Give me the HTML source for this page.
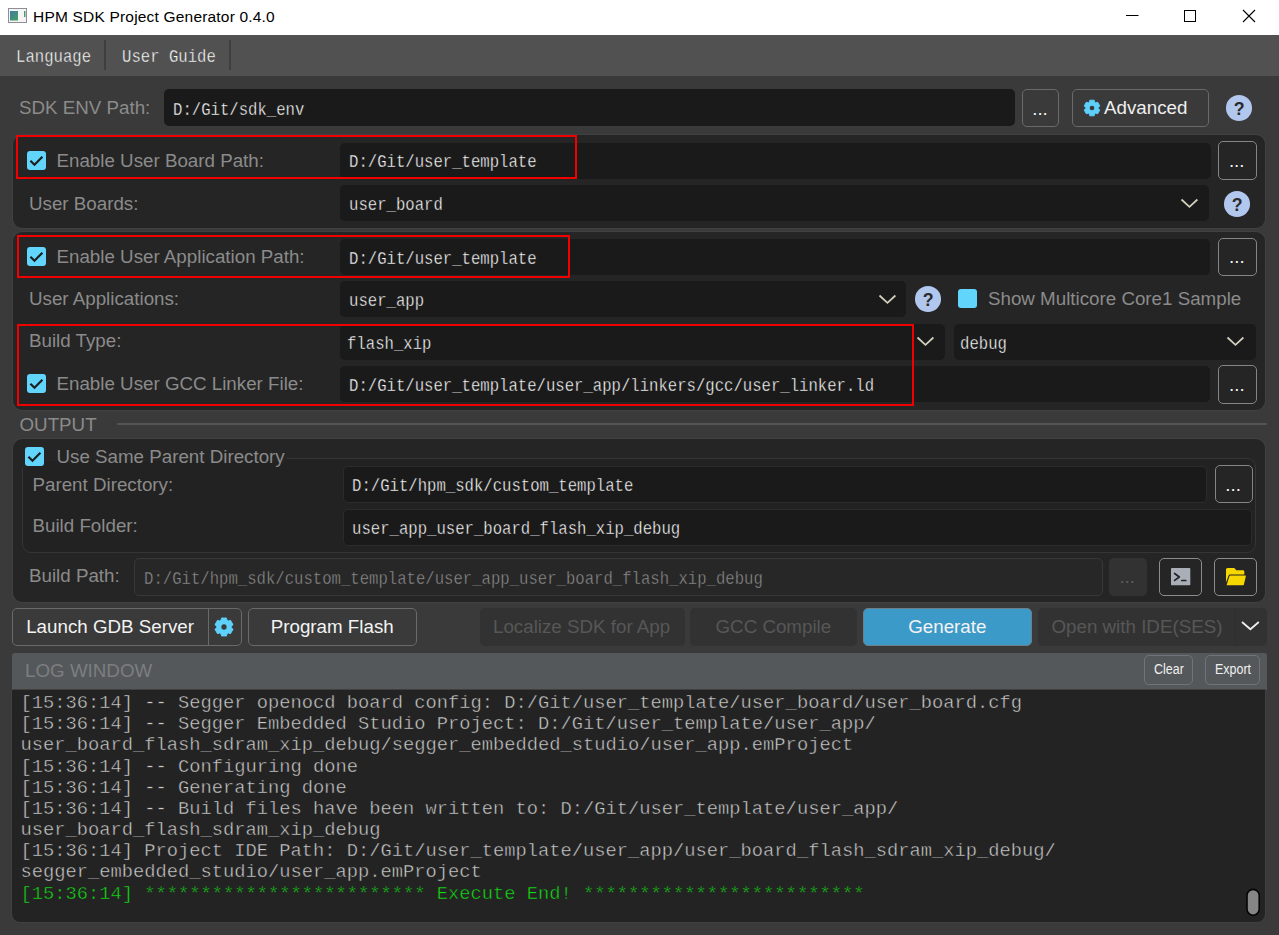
<!DOCTYPE html>
<html>
<head>
<meta charset="utf-8">
<title>HPM SDK Project Generator 0.4.0</title>
<style>
*{box-sizing:border-box;margin:0;padding:0}
html,body{width:1279px;height:935px;overflow:hidden;background:#3a3a3a;font-family:"Liberation Sans",sans-serif}
#app{position:relative;width:1279px;height:935px;overflow:hidden;background:#3a3a3a}
.abs{position:absolute}
.titlebar{left:0;top:0;width:1279px;height:35px;background:#fff}
.title{left:33px;top:7px;height:20px;line-height:20px;font-size:15.5px;letter-spacing:0.19px;color:#000;white-space:nowrap}
.menubar{left:0;top:35px;width:1279px;height:41px;background:#515151}
.msep{width:1.500px;top:40px;height:30px;background:#3e3e3e}
/* SimSun-like narrow mono */
.m{position:absolute;font-family:"Liberation Mono",monospace;font-size:18.750px;height:24px;line-height:24px;white-space:pre;color:#ffffff;-webkit-text-stroke:0.400px #1a1a1a;transform:scaleX(0.8333);transform-origin:0 50%}
.l{position:absolute;font-size:18.750px;height:22px;line-height:22px;white-space:nowrap;color:#8b8b8b}
.panel{position:absolute;background:#252525;border-radius:9px;box-shadow:0 0 0 1px #414141}
.in{position:absolute;background:#1a1a1a;border-radius:5px}
.btn{position:absolute;border:1px solid #6a6a6a;border-radius:5px;background:#3a3a3a}
.dots{position:absolute;display:flex;gap:2px}
.dots i{display:block;width:2px;height:2px;background:#f2f2f2}
.cb{position:absolute;width:19px;height:19px;border-radius:3px;background:#61d5fc}
.red{position:absolute;border:2px solid #f20000}
.chev{fill:none;stroke:#d3d0be;stroke-width:1.75}
.l.w{color:#f3f3f3}
.l.d{color:#575757}
.l.s{font-size:14px;color:#f0f0f0;height:20px;line-height:20px;transform:scaleX(0.89);transform-origin:0 50%}
.dis{position:absolute;background:#323232;border-radius:5px}
.btn.sm{background:#54585b;border-color:#70747a;border-radius:5px}
.log{left:20.500px;top:693px;font-family:"Liberation Mono",monospace;font-size:18.750px;line-height:21.170px;color:#cdcdcd;-webkit-text-stroke:0.450px #232323;white-space:pre}
.help{position:absolute;width:26.200px;height:26.200px;border-radius:50%;background:#b1c7ee;color:#2b2b2b;font-weight:bold;font-size:18.500px;line-height:26.200px;text-align:center;-webkit-text-stroke:0.300px #2b2b2b}
</style>
</head>
<body>
<div id="app">

<svg width="0" height="0" style="position:absolute"><defs>
<g id="gear"><path d="M2.97 -6.67L2.56 -8.94L-2.56 -8.94L-2.97 -6.67L-4.29 -5.91L-6.46 -6.69L-9.02 -2.25L-7.26 -0.76L-7.26 0.76L-9.02 2.25L-6.46 6.69L-4.29 5.91L-2.97 6.67L-2.56 8.94L2.56 8.94L2.97 6.67L4.29 5.91L6.46 6.69L9.02 2.25L7.26 0.76L7.26 -0.76L9.02 -2.25L6.46 -6.69L4.29 -5.91Z" fill="#5ed1fb" stroke="#5ed1fb" stroke-width="1" stroke-linejoin="round"/></g>
</defs></svg>
<!-- title bar -->
<div class="abs titlebar"></div>
<svg class="abs" style="left:8px;top:8px" width="20" height="16" viewBox="0 0 20 16">
  <defs><linearGradient id="ig" x1="0" y1="0" x2="1" y2="1"><stop offset="0" stop-color="#3f78a8"/><stop offset="1" stop-color="#46a05a"/></linearGradient></defs>
  <rect x="0.5" y="0.5" width="18" height="14" fill="#f4f4f4" stroke="#8e8e96"/>
  <rect x="2" y="3" width="8" height="9.5" fill="url(#ig)"/>
  <rect x="16" y="3" width="1.5" height="6" fill="#4f9a74"/>
</svg>
<div class="abs title" id="title">HPM SDK Project Generator 0.4.0</div>
<svg class="abs" style="left:1120px;top:5px" width="145" height="24" viewBox="0 0 145 24" fill="none" stroke="#000" stroke-width="1">
  <path d="M6 10.5H18.5"/>
  <rect x="64.5" y="5.500" width="11" height="11"/>
  <path d="M123 5L135 17M135 5L123 17" stroke-width="1.1"/>
</svg>

<!-- menu bar -->
<div class="abs menubar"></div>
<div class="m" style="left:16px;top:44.700px;color:#ffffff;-webkit-text-stroke-color:#515151" id="m_lang">Language</div>
<div class="abs msep" style="left:104px"></div>
<div class="m" style="left:122px;top:44.700px;color:#ffffff;-webkit-text-stroke-color:#515151" id="m_ug">User Guide</div>
<div class="abs msep" style="left:229px"></div>

<!-- SDK ENV row -->
<div class="l" style="left:19px;top:97px" id="l_sdk">SDK ENV Path:</div>
<div class="in" style="left:164px;top:89px;width:851px;height:37px"></div>
<div class="m" style="left:173px;top:98px" id="t_sdk">D:/Git/sdk_env</div>
<div class="btn" style="left:1022px;top:89px;width:37px;height:38px"></div>
<div class="l w dt" style="left:1032.2px;top:98.2px">...</div>
<div class="btn" style="left:1072px;top:89px;width:137px;height:38px"></div>
<svg class="abs" style="left:1082px;top:97.800px" width="20" height="20" viewBox="-10 -10 20 20"><use href="#gear" transform="scale(0.875)"/><circle r="2.35" fill="#3a3a3a"/></svg>
<div class="l" style="left:1104px;top:97px;color:#eeeeee" id="l_adv">Advanced</div>
<svg class="abs" style="left:1224.60px;top:94.45px" width="28" height="28"><circle cx="14" cy="14" r="13.05" fill="#b1c7ee"/><text x="14.1" y="20.5" text-anchor="middle" font-family="Liberation Sans" font-weight="bold" font-size="17.800" fill="#2a2a2a">?</text></svg>

<!-- group 1 -->
<div class="panel" style="left:13px;top:134.500px;width:1252px;height:93.500px"></div>
<div class="cb" style="left:27px;top:151px"><svg width="19" height="19" viewBox="0 0 19 19"><path d="M3.4 9.7L7.5 13.7L15.4 5.7" fill="none" stroke="#1e1e1e" stroke-width="2.2"/></svg></div>
<div class="l" style="left:56.5px;top:150px" id="l_eb">Enable User Board Path:</div>
<div class="in" style="left:340px;top:143px;width:871px;height:36px"></div>
<div class="m" style="left:349px;top:150px" id="t_eb">D:/Git/user_template</div>
<div class="btn" style="left:1218px;top:141px;width:38.500px;height:39px;background:#252525;border-color:#858585"></div>
<div class="l w dt" style="left:1228.900px;top:150.300px">...</div>
<div class="red" style="left:16px;top:135px;width:561px;height:44px"></div>
<div class="l" style="left:29px;top:192.5px" id="l_ub">User Boards:</div>
<div class="in" style="left:340px;top:185px;width:869px;height:36px"></div>
<div class="m" style="left:349px;top:193px" id="t_ub">user_board</div>
<svg class="abs chev" style="left:1180px;top:197px" width="20" height="14"><path d="M1.5 2.5L9.45 9.9L17.4 2.5"/></svg>
<svg class="abs" style="left:1223.40px;top:189.50px" width="28" height="28"><circle cx="14" cy="14" r="13.05" fill="#b1c7ee"/><text x="14.1" y="20.5" text-anchor="middle" font-family="Liberation Sans" font-weight="bold" font-size="17.800" fill="#2a2a2a">?</text></svg>

<!-- group 2 -->
<div class="panel" style="left:13px;top:232px;width:1252px;height:178px"></div>
<div class="cb" style="left:27px;top:247px"><svg width="19" height="19" viewBox="0 0 19 19"><path d="M3.4 9.7L7.5 13.7L15.4 5.7" fill="none" stroke="#1e1e1e" stroke-width="2.2"/></svg></div>
<div class="l" style="left:56.5px;top:246px" id="l_ea">Enable User Application Path:</div>
<div class="in" style="left:340px;top:239px;width:870px;height:36px"></div>
<div class="m" style="left:349px;top:246.500px" id="t_ea">D:/Git/user_template</div>
<div class="btn" style="left:1218px;top:237.500px;width:38.500px;height:38.500px;background:#252525;border-color:#858585"></div>
<div class="l w dt" style="left:1229.100px;top:246.300px">...</div>
<div class="red" style="left:17px;top:235px;width:552.500px;height:43px"></div>

<div class="l" style="left:29px;top:287.5px" id="l_ua">User Applications:</div>
<div class="in" style="left:340px;top:281px;width:566px;height:36px"></div>
<div class="m" style="left:349px;top:289px" id="t_ua">user_app</div>
<svg class="abs chev" style="left:877.900px;top:292.900px" width="20" height="14"><path d="M1.5 2.5L9.45 9.9L17.4 2.5"/></svg>
<svg class="abs" style="left:913.70px;top:285.40px" width="28" height="28"><circle cx="14" cy="14" r="13.05" fill="#b1c7ee"/><text x="14.1" y="20.5" text-anchor="middle" font-family="Liberation Sans" font-weight="bold" font-size="17.800" fill="#2a2a2a">?</text></svg>
<div class="cb" style="left:958px;top:289.250px"></div>
<div class="l" style="left:988px;top:288px" id="l_sm">Show Multicore Core1 Sample</div>

<div class="l" style="left:29px;top:329.5px" id="l_bt">Build Type:</div>
<div class="in" style="left:340px;top:324px;width:605px;height:36px"></div>
<div class="m" style="left:347px;top:332px" id="t_fx">flash_xip</div>
<svg class="abs chev" style="left:916px;top:334.900px" width="20" height="14"><path d="M1.5 2.5L9.45 9.9L17.4 2.5"/></svg>
<div class="in" style="left:954px;top:324px;width:302px;height:36px"></div>
<div class="m" style="left:960px;top:332px" id="t_db">debug</div>
<svg class="abs chev" style="left:1226.100px;top:334.900px" width="20" height="14"><path d="M1.5 2.5L9.45 9.9L17.4 2.5"/></svg>

<div class="cb" style="left:27px;top:374px"><svg width="19" height="19" viewBox="0 0 19 19"><path d="M3.4 9.7L7.5 13.7L15.4 5.7" fill="none" stroke="#1e1e1e" stroke-width="2.2"/></svg></div>
<div class="l" style="left:56.5px;top:373px" id="l_el">Enable User GCC Linker File:</div>
<div class="in" style="left:340px;top:366px;width:870px;height:36px"></div>
<div class="m" style="left:349px;top:374px" id="t_el">D:/Git/user_template/user_app/linkers/gcc/user_linker.ld</div>
<div class="btn" style="left:1218px;top:365px;width:38.500px;height:38.500px;background:#252525;border-color:#858585"></div>
<div class="l w dt" style="left:1229.100px;top:374.300px">...</div>
<div class="red" style="left:17px;top:324px;width:897px;height:82px"></div>

<!--OUTPUT-->
<div class="l" style="left:19.5px;top:413.5px" id="l_out">OUTPUT</div>
<div class="abs" style="left:117px;top:423px;width:1150px;height:2px;background:#535353"></div>
<div class="panel" style="left:13px;top:439px;width:1252px;height:163px"></div>
<div class="abs" style="left:22px;top:457.500px;width:1234px;height:95.500px;border:1px solid #353535;border-radius:9px;background:#222222"></div>
<div class="abs" style="left:20px;top:455px;width:267px;height:6px;background:#252525"></div>
<div class="abs" style="left:20px;top:455px;width:6px;height:13px;background:#252525"></div>
<div class="cb" style="left:25px;top:447px"><svg width="19" height="19" viewBox="0 0 19 19"><path d="M3.4 9.7L7.5 13.7L15.4 5.7" fill="none" stroke="#1e1e1e" stroke-width="2.2"/></svg></div>
<div class="l" style="left:56.5px;top:446px" id="l_us">Use Same Parent Directory</div>
<div class="l" style="left:32.5px;top:474px" id="l_pd">Parent Directory:</div>
<div class="in" style="left:343px;top:466px;width:864px;height:37px;border:1px solid #2b2b2b"></div>
<div class="m" style="left:352px;top:474px" id="t_pd">D:/Git/hpm_sdk/custom_template</div>
<div class="btn" style="left:1214.500px;top:464.800px;width:38px;height:38.700px;background:#252525;border-color:#858585"></div>
<div class="l w dt" style="left:1225.300px;top:474.200px">...</div>
<div class="l" style="left:32.5px;top:515px" id="l_bf">Build Folder:</div>
<div class="in" style="left:343px;top:509px;width:909px;height:37px;border:1px solid #2b2b2b"></div>
<div class="m" style="left:352px;top:517px" id="t_bf">user_app_user_board_flash_xip_debug</div>
<div class="l" style="left:29px;top:565.300px" id="l_bp">Build Path:</div>
<div class="in" style="left:134px;top:558px;width:969px;height:37.500px;background:#272727;border:1px solid #383838"></div>
<div class="m" style="left:144px;top:567px;color:#8e8e8e;-webkit-text-stroke-color:#272727" id="t_bp">D:/Git/hpm_sdk/custom_template/user_app_user_board_flash_xip_debug</div>
<div class="abs" style="left:1109px;top:558px;width:37.500px;height:38px;background:#323232;border-radius:5px"></div>
<div class="l w dt" style="left:1119.400px;top:566.300px;color:#5c5c5c">...</div>
<div class="btn" style="left:1159px;top:558px;width:42.500px;height:38px;background:#252525;border-color:#8c8c8c"></div>
<div class="btn" style="left:1214px;top:558px;width:42.500px;height:38px;background:#252525;border-color:#8c8c8c"></div>
<svg class="abs" style="left:1170.800px;top:567.700px" width="20" height="18" viewBox="0 0 20 18"><rect x="0" y="0" width="19.300" height="17.300" rx="0.800" fill="#a9aeb7"/><path d="M3.600 5.500L8.300 9L3.600 12.400" fill="none" stroke="#232323" stroke-width="1.700" stroke-linecap="round" stroke-linejoin="round"/><path d="M10.800 12.500H14.800" stroke="#232323" stroke-width="1.700" stroke-linecap="round"/></svg>
<svg class="abs" style="left:1225.800px;top:567.700px" width="21" height="18" viewBox="0 0 21 18"><path d="M0 1.500Q0 0 1.500 0H8.300L10.300 2.200H17Q18.300 2.200 18.300 3.500V6.400H4Q3 6.400 2.600 7.400L0 14.500Z" fill="#f7d700"/><path d="M4.300 7.600H19.200Q20.200 7.600 19.800 8.600L17.900 16.400Q17.600 17.300 16.700 17.300H0.600L3.300 8.400Q3.600 7.600 4.300 7.600Z" fill="#f7d700"/></svg>

<!-- buttons row -->
<div class="btn" style="left:12px;top:608px;width:196.500px;height:38px;border-radius:5px 0 0 5px"></div>
<div class="l w" style="left:26.200px;top:616px" id="l_gdb">Launch GDB Server</div>
<div class="btn" style="left:207.500px;top:608px;width:34px;height:38px;border-radius:0 5px 5px 0"></div>
<svg class="abs" style="left:213.150px;top:616px" width="22" height="22" viewBox="-11 -11 22 22"><use href="#gear"/><circle r="2.65" fill="#3a3a3a"/></svg>
<div class="btn" style="left:248px;top:608px;width:168.500px;height:38px"></div>
<div class="l w" style="left:270.75px;top:616px" id="l_pf">Program Flash</div>
<div class="dis" style="left:480px;top:608px;width:204.500px;height:38px"></div>
<div class="l d" style="left:493px;top:616px" id="l_loc">Localize SDK for App</div>
<div class="dis" style="left:690px;top:608px;width:166.500px;height:38px"></div>
<div class="l d" style="left:715.5px;top:616px" id="l_gcc">GCC Compile</div>
<div class="btn" style="left:863px;top:608px;width:168.500px;height:38px;background:#3c9ac9;border-color:#6d7f8a"></div>
<div class="l w" style="left:908.25px;top:616px" id="l_gen">Generate</div>
<div class="dis" style="left:1038px;top:608px;width:228.500px;height:38px"></div>
<div class="abs" style="left:1235px;top:608px;width:1px;height:38px;background:#2e2e2e"></div>
<div class="l d" style="left:1051.5px;top:616px" id="l_ide">Open with IDE(SES)</div>
<svg class="abs chev" style="left:1239.500px;top:618.500px;stroke:#eee;stroke-width:1.8" width="21" height="15"><path d="M2 3L10.400 10.200L18.800 3"/></svg>

<!-- log -->
<div class="abs" style="left:12px;top:653px;width:1254.500px;height:37px;background:#54585b;border-radius:3px 3px 0 0"></div>
<div class="l" style="left:25.100px;top:659.500px;color:#7c7e80" id="l_log">LOG WINDOW</div>
<div class="btn sm" style="left:1144px;top:655px;width:48.700px;height:30px"></div>
<div class="l s" style="left:1153.900px;top:659px" id="l_clr">Clear</div>
<div class="btn sm" style="left:1205px;top:655px;width:55px;height:30px"></div>
<div class="l s" style="left:1214.700px;top:659px" id="l_exp">Export</div>
<div class="abs" style="left:12px;top:690px;width:1253px;height:231.500px;background:#232323;border-radius:0 0 8px 8px;box-shadow:0 0 0 1px #404040"></div>
<pre class="abs log" id="log">[15:36:14] -- Segger openocd board config: D:/Git/user_template/user_board/user_board.cfg
[15:36:14] -- Segger Embedded Studio Project: D:/Git/user_template/user_app/
user_board_flash_sdram_xip_debug/segger_embedded_studio/user_app.emProject
[15:36:14] -- Configuring done
[15:36:14] -- Generating done
[15:36:14] -- Build files have been written to: D:/Git/user_template/user_app/
user_board_flash_sdram_xip_debug
[15:36:14] Project IDE Path: D:/Git/user_template/user_app/user_board_flash_sdram_xip_debug/
segger_embedded_studio/user_app.emProject
<span style="color:#14dc14">[15:36:14] ************************* Execute End! *************************</span></pre>
<svg class="abs" style="left:1240px;top:880px" width="30" height="45"><rect x="7" y="9.400" width="12.200" height="25.800" rx="6.100" fill="#868686" stroke="#050505" stroke-width="1.600"/></svg>

</div>
</body>
</html>
